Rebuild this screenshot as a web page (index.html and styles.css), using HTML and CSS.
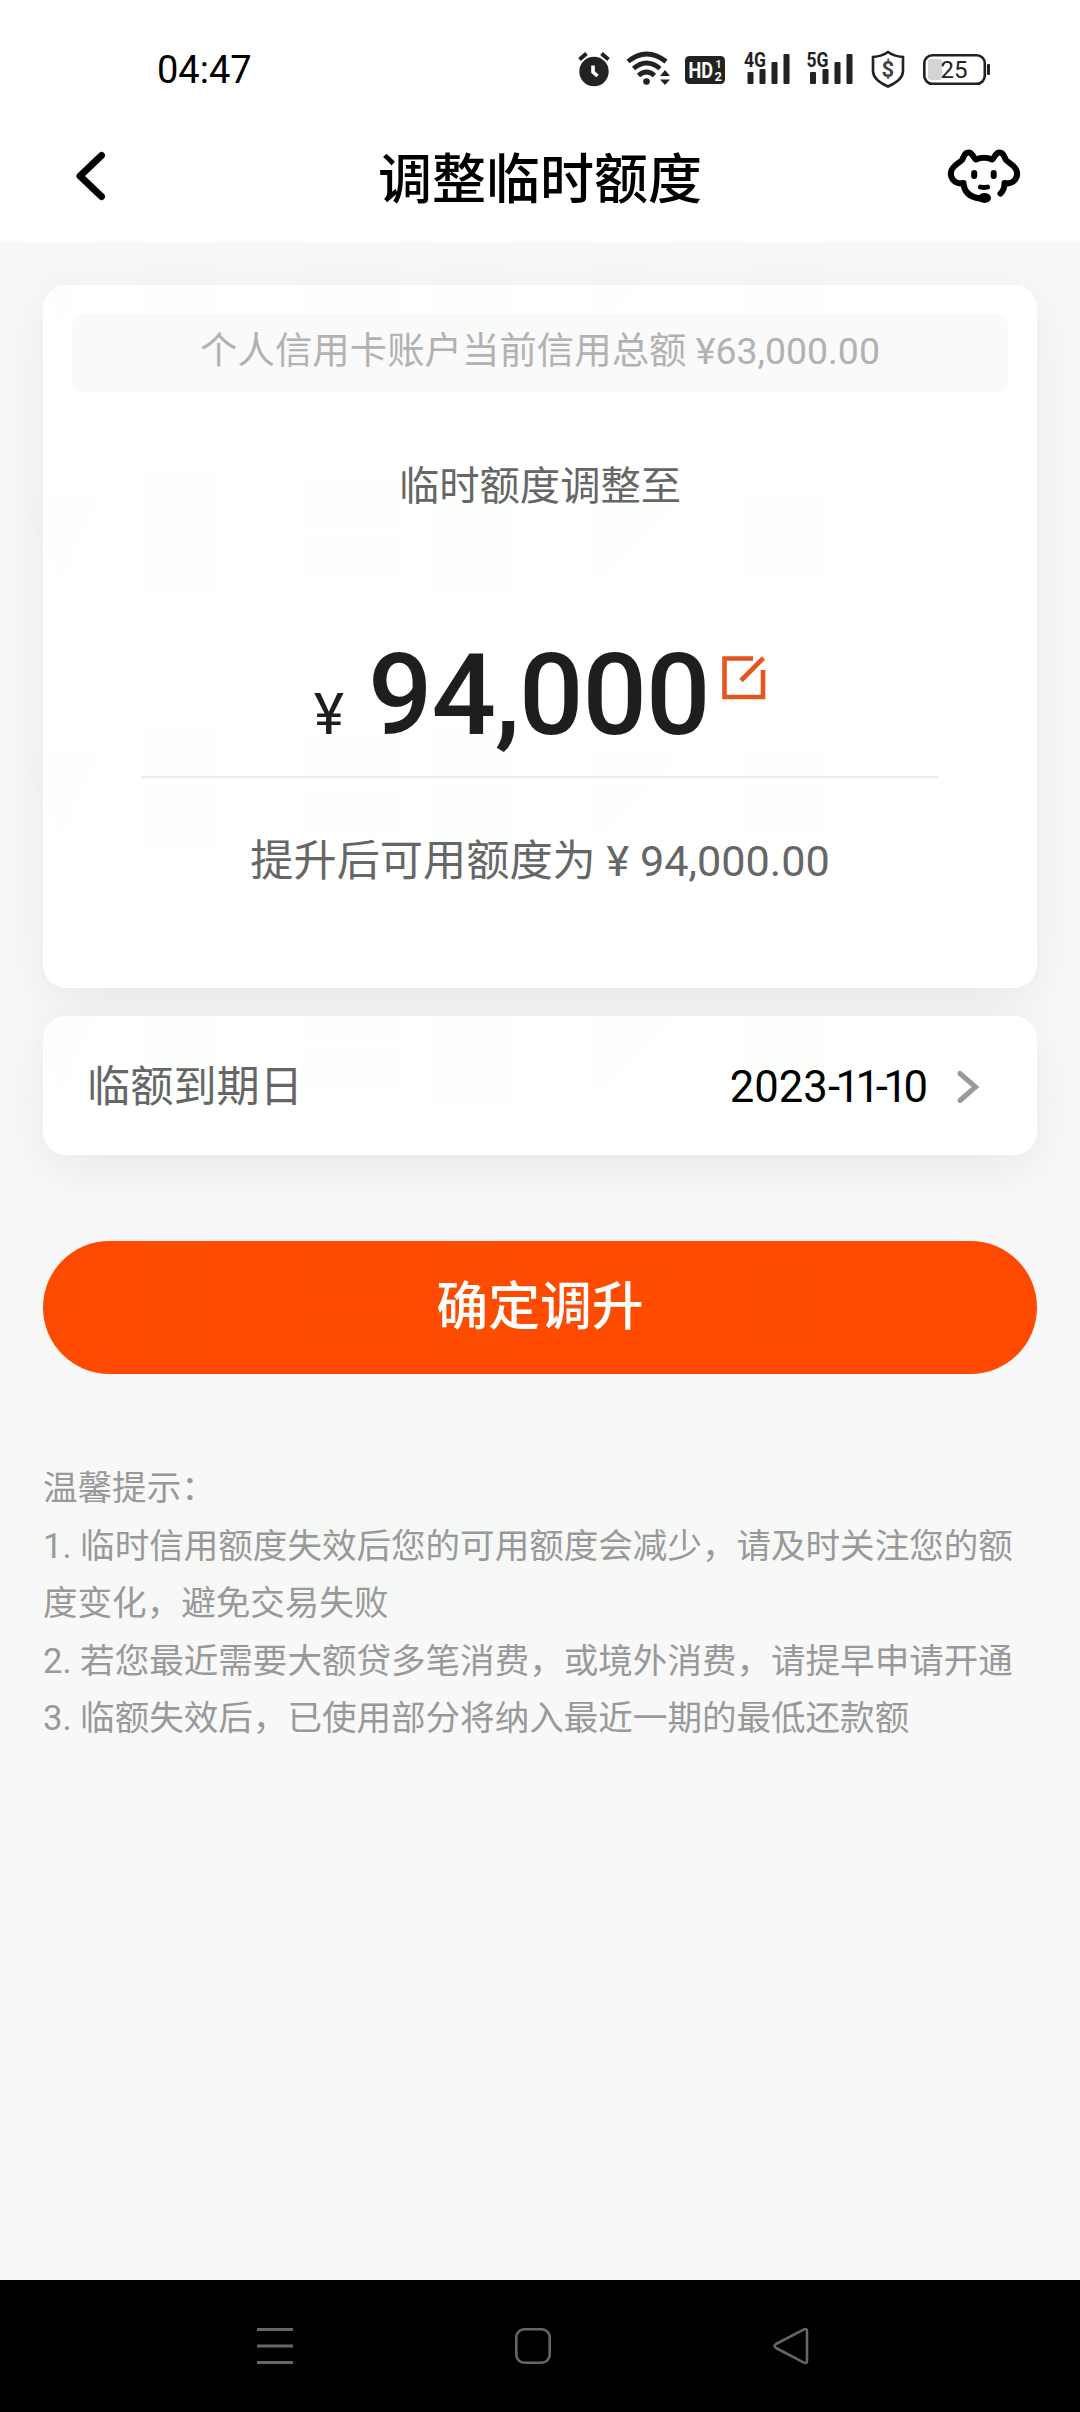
FILE: index.html
```html
<!DOCTYPE html>
<html lang="zh-CN">
<head>
<meta charset="utf-8">
<title>调整临时额度</title>
<link rel="stylesheet" href="styles.css">
</head>
<body>
<div class="screen">
  <header class="top">
    <div class="status">
      <span class="clock">04:47</span>
      <svg class="status-icons" width="420" height="60" viewBox="576 40 420 60">
        <g fill="#222">
          <circle cx="594" cy="71.500" r="14.700"/>
          <path d="M579.500 59.500l7-6M608.500 59.500l-7-6" stroke="#222" stroke-width="4"/>
          <path d="M593 65.500v6.500l4.500 4" stroke="#fff" stroke-width="3.600" fill="none"/>
          <g fill="none" stroke="#222" stroke-width="4.800">
            <path d="M628 61.500q18.500-15 38 0"/><path d="M633.500 68.500q13-11 26.500 0"/><path d="M638.500 75.500q8-7 16 0"/>
          </g>
          <circle cx="646.500" cy="81.500" r="3.300"/>
          <path d="M660 76l5-6 5 6zM660 79.500l5 5.500 5-5.500z"/>
          <rect x="685" y="56" width="40" height="28" rx="4.500"/>
          <rect x="747.500" y="72" width="6" height="12" rx="1"/><rect x="759.500" y="69" width="6" height="15" rx="1"/><rect x="771.500" y="62" width="6" height="22" rx="1"/><rect x="783.500" y="54" width="6" height="30" rx="1"/>
          <rect x="810" y="72" width="6" height="12" rx="1"/><rect x="822.500" y="69" width="6" height="15" rx="1"/><rect x="834.500" y="62" width="6" height="22" rx="1"/><rect x="846.500" y="54" width="6" height="30" rx="1"/>
        </g>
        <g class="glyphs">
          <text x="688.500" y="78" font-size="22.500" fill="#fff" textLength="24.500" lengthAdjust="spacingAndGlyphs">HD</text>
          <text x="715.500" y="67.500" font-size="10.500" fill="#fff">1</text>
          <text x="714.500" y="80.500" font-size="13" fill="#fff">2</text>
          <text x="744" y="67" font-size="20.500" fill="#222" textLength="22" lengthAdjust="spacingAndGlyphs">4G</text>
          <text x="806.500" y="67" font-size="20.500" fill="#222" textLength="22" lengthAdjust="spacingAndGlyphs">5G</text>
          <text x="887.700" y="76.500" font-size="22" fill="#444" text-anchor="middle">$</text>
        </g>
        <path d="M888 52c4 3 9 4.500 15 5v14c0 7-7 12-15 15.500-8-3.500-15-8.500-15-15.500v-14c6-.5 11-2 15-5z" fill="none" stroke="#222" stroke-width="2.600"/>
        <rect x="928" y="59" width="14" height="21" rx="3" fill="#d4d4d4"/>
        <rect x="924.300" y="55.300" width="60.500" height="28.500" rx="8" fill="none" stroke="#222" stroke-width="2.600"/>
        <rect x="987" y="64" width="3" height="11" rx="1" fill="#222"/>
        <text class="level" x="954" y="78" font-size="24" fill="#222" text-anchor="middle">25</text>
      </svg>
    </div>
    <div class="titlebar">
      <svg class="back" width="34" height="52" viewBox="74 150 34 52" fill="none" stroke="#000" stroke-width="7" stroke-linecap="round" stroke-linejoin="round"><path d="M101.500 155.500L80 176l21.500 20.500"/></svg>
      <h1>调整临时额度</h1>
      <svg class="service" width="76" height="60" viewBox="946 146 76 60" fill="none" stroke="#000" stroke-width="6" stroke-linecap="round" stroke-linejoin="round">
        <path d="M980 198.500C969 197 964 192 963.500 183C955 185 950 178 951 172C952 166 959 163 962 160C964 157 964 152.500 968.500 152.500C973 152.500 973 158 976 159.500Q984 156 992 159.500C995 158 995 152.500 999.500 152.500C1004 152.500 1004 157 1006 160C1010 164 1016 166 1017 172C1018 178 1013 185 1004.500 183Q1004.500 190 1000.500 193.500"/>
        <ellipse cx="984.500" cy="198" rx="6.500" ry="5" fill="#000" stroke="none"/>
        <path d="M974.200 173v3M993.700 173v3"/>
        <path d="M980.500 187q3.500 1.200 7 0" stroke-width="5"/>
      </svg>
    </div>
  </header>
  <main class="content">
    <section class="card amount-card">
      <p class="notice">个人信用卡账户当前信用总额 ¥63,000.00</p>
      <p class="caption">临时额度调整至</p>
      <div class="amount">
        <span class="yen">¥</span><span class="value">94,000</span>
        <svg class="edit" width="44" height="44" viewBox="0 0 44 44" fill="none" stroke="#e2571e" stroke-width="4.600"><path d="M31 2.500H2.500V41H41V14"/><path d="M19 24.500L41.500 2"/></svg>
      </div>
      <p class="after">提升后可用额度为 ¥ 94,000.00</p>
    </section>
    <section class="card due-card">
      <span class="due-label">临额到期日</span>
      <span class="due-date">2023<span class="tight">-11-1</span>0</span>
      <svg width="26" height="36" viewBox="0 0 26 36" fill="none" stroke="#999" stroke-width="5" stroke-linecap="round"><path d="M4 4.500L19.500 18 4 31.500"/></svg>
    </section>
    <button class="confirm">确定调升</button>
    <div class="tips">
      <p>温馨提示：</p>
      <p>1. 临时信用额度失效后您的可用额度会减少，请及时关注您的额度变化，避免交易失败</p>
      <p>2. 若您最近需要大额贷多笔消费，或境外消费，请提早申请开通</p>
      <p>3. 临额失效后，已使用部分将纳入最近一期的最低还款额</p>
    </div>
    <svg class="watermark" width="1080" height="2038" viewBox="0 242 1080 2038">
      <defs>
        <pattern id="mark" width="1080" height="256" y="216" patternUnits="userSpaceOnUse">
          <path fill="#00ff00" fill-opacity=".008" d="M20 27H98L64 105H58ZM142 0H217V120H142ZM300 8H400V56H300ZM300 64H400V108H300ZM434 0H510V120H434ZM592 25H680L606 105H592ZM747 24H825V104H747Z"/>
        </pattern>
      </defs>
      <rect y="242" width="1080" height="2038" fill="url(#mark)"/>
    </svg>
  </main>
  <nav class="navbar">
    <svg width="38" height="38" viewBox="0 0 38 38" stroke="#666" stroke-width="3"><path d="M1 2.500H37M1 19H37M1 35.500H37"/></svg>
    <svg width="38" height="38" viewBox="0 0 38 38" fill="none" stroke="#666" stroke-width="2.600"><rect x="2.300" y="2.300" width="33.400" height="33.400" rx="8"/></svg>
    <svg width="38" height="38" viewBox="0 0 38 38" fill="none" stroke="#666" stroke-width="2.600" stroke-linejoin="round"><path d="M31.500 2.700Q35 1 35 4V34Q35 37 31.500 35.300L4 21Q1 19 4 17Z"/></svg>
  </nav>
</div>
</body>
</html>
```
FILE: styles.css
```css
* { box-sizing: border-box; margin: 0; padding: 0; }
body { font-family: Roboto, "Noto Sans CJK SC", sans-serif; background: #f8f8f8; }
svg { display: block; flex: none; }
.screen { width: 1080px; height: 2412px; display: flex; flex-direction: column; overflow: hidden; }
.top { height: 242px; background: #fff; flex: none; }
.status { display: flex; justify-content: space-between; align-items: center; height: 140px; padding: 0 84px 0 157px; }
.clock { font-size: 38px; line-height: 44px; color: #000; }
.glyphs { font-family: Roboto, sans-serif; font-weight: 700; }
.level { font-family: Roboto, sans-serif; }
.titlebar { display: grid; grid-template-columns: 1fr auto 1fr; align-items: center; height: 72px; padding: 0 58px; }
.back { margin-left: 16px; }
.service { justify-self: end; }
h1 { font-size: 54px; line-height: 72px; font-weight: 500; color: #000; padding-top: 5px; height: 72px; }
.content { position: relative; flex: 1; padding: 43px 43px 0; }
.card { background: #fff; border-radius: 23px; box-shadow: 0 14px 50px rgba(0, 0, 0, .065); }
.amount-card { height: 703px; padding: 29px 29px 0; text-align: center; }
.notice { height: 78px; line-height: 75px; border-radius: 12px; background: #fafafa; color: #b2b2b2; font-size: 37.44px; }
.caption { margin-top: 65px; height: 60px; line-height: 60px; font-size: 40.32px; color: #666; }
.amount { display: flex; align-items: baseline; justify-content: center; height: 261px; margin: 0 69px; padding-top: 111px; border-bottom: 2px solid #ebebeb; color: #1e1e1e; line-height: 136px; }
.yen { font-size: 57.6px; margin-right: 24px; }
.value { font-size: 113.5px; font-weight: 500; letter-spacing: -1.1px; }
.edit { align-self: flex-start; margin: 28px 0 0 13px; }
.after { margin-top: 54px; line-height: 60px; font-size: 43.2px; color: #666; }
.due-card { margin-top: 28px; height: 139px; padding: 0 55px 0 44px; display: flex; align-items: center; }
.due-label { flex: 1; font-size: 43.2px; line-height: 60px; color: #666; padding-top: 5px; }
.due-date { font-size: 43.6px; color: #000; margin: 3px 28px 0 0; }
.due-card svg { margin-top: 3px; }
.tight { letter-spacing: -4.4px; }
.confirm { display: block; width: 100%; height: 133px; margin-top: 86px; border: 0; border-radius: 67px; background: #ff4a00; color: #fff; font: 500 51.84px/133px Roboto, "Noto Sans CJK SC", sans-serif; }
.tips { margin-top: 86px; font-size: 34.56px; line-height: 57.6px; color: #999; }
.watermark { position: absolute; left: 0; top: 0; pointer-events: none; }
.navbar { height: 132px; flex: none; background: #000; display: flex; align-items: center; justify-content: space-between; padding: 0 270px 0 256px; }
```
